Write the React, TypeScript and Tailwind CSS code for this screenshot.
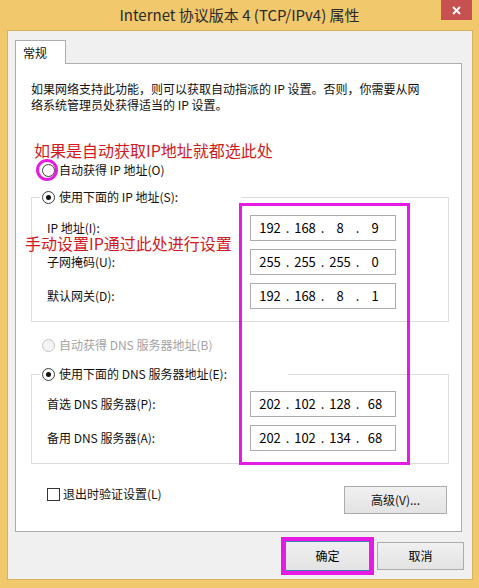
import { Fragment } from 'react';

const ui = "font-['Noto_Sans_CJK_SC',sans-serif]";

function Radio({ checked, disabled }: { checked?: boolean; disabled?: boolean }) {
  return (
    <span
      className={`flex h-[13px] w-[13px] shrink-0 items-center justify-center rounded-full border ${
        disabled ? 'border-[#c4c4c4] bg-[#f4f4f4]' : 'border-[#3c3c3c] bg-white'
      }`}
    >
      {checked && <span className="h-[5px] w-[5px] rounded-full bg-[#111]" />}
    </span>
  );
}

function IpInput({ parts }: { parts: string[] }) {
  return (
    <div className="flex h-[26px] w-[146px] items-center border border-[#a9abb1] bg-white pl-[4px] text-[13px] text-black">
      {parts.map((p, i) => (
        <Fragment key={i}>
          <span className="w-[30px] text-center">{p}</span>
          {i < 3 && <span className="w-[5px] text-center">.</span>}
        </Fragment>
      ))}
    </div>
  );
}

function FieldRow({ label, parts }: { label: string; parts: string[] }) {
  return (
    <div className="flex items-center">
      <span className="w-[218px] pl-[15px]">{label}</span>
      <IpInput parts={parts} />
    </div>
  );
}

function Button({ children, focused }: { children: React.ReactNode; focused?: boolean }) {
  return (
    <div
      className={`flex items-center justify-center border bg-gradient-to-b from-[#f0f0f0] to-[#e3e3e3] text-[12px] text-black ${
        focused ? 'h-[30px] w-[85px] border-[#3c7fb1]' : 'h-[28px] w-[87px] border-[#acacac]'
      }`}
    >
      {children}
    </div>
  );
}

export default function App() {
  return (
    <div className={`flex h-[588px] w-[479px] flex-col bg-[#f1c86c] ${ui} text-[12px] leading-[16px] text-[#111]`}>
      {/* 标题栏 */}
      <div className="relative flex h-[30px] items-center justify-center">
        <span className="text-[15px] text-[#2a2a2a]">Internet 协议版本 4 (TCP/IPv4) 属性</span>
        <div className="absolute right-[7px] top-0 flex h-[20px] w-[31px] items-center justify-center bg-[#c75050]">
          <svg width="9" height="9" viewBox="0 0 9 9">
            <path d="M1 1 L8 8 M8 1 L1 8" stroke="#fff" strokeWidth="1.8" />
          </svg>
        </div>
      </div>

      {/* 客户区 */}
      <div className="mb-[8px] ml-[7px] mr-[6px] flex flex-1 flex-col border border-[#d8b260] bg-[#f0f0f0] pl-[7px] pr-[8px]">
        {/* 选项卡 */}
        <div className="mt-[9px] flex">
          <div className="relative z-10 -mb-px flex h-[24px] w-[51px] items-center border border-b-0 border-[#adadad] bg-white pl-[7px]">
            常规
          </div>
        </div>

        <div className="relative w-[447px] border border-[#adadad] bg-white pb-[17px]">
          <p className="pl-[15px] pt-[17px]">
            如果网络支持此功能，则可以获取自动指派的 IP 设置。否则，你需要从网
            <br />
            络系统管理员处获得适当的 IP 设置。
          </p>

          <p className="mt-[27px] pl-[18px] text-[16px] leading-[20px] text-[#d01a1e]">如果是自动获取IP地址就都选此处</p>

          <div className="mt-[2px] flex h-[16px] items-center gap-[4px] pl-[26px]">
            <span className="relative">
              <Radio />
              <span className="absolute -left-[6px] -top-[5px] h-[22px] w-[22px] rounded-full border-[3px] border-[#e51be5]" />
            </span>
            <span>自动获得 IP 地址(O)</span>
          </div>

          {/* IP 分组 */}
          <div className="relative ml-[15px] mr-[12px] mt-[19px] flex flex-col gap-[8px] border border-[#dcdcdc] pb-[12px]">
            <div className="-mt-[9px] mb-[2px] ml-[8px] flex h-[16px] w-[201px] items-center gap-[4px] bg-white pl-[2px]">
              <Radio checked />
              <span>使用下面的 IP 地址(S):</span>
            </div>
            <FieldRow label="IP 地址(I):" parts={['192', '168', '8', '9']} />
            <FieldRow label="子网掩码(U):" parts={['255', '255', '255', '0']} />
            <FieldRow label="默认网关(D):" parts={['192', '168', '8', '1']} />
            <span className="absolute -left-[7px] top-[36px] whitespace-nowrap text-[16px] leading-[18px] text-[#d01a1e]">
              手动设置IP通过此处进行设置
            </span>
          </div>

          <div className="mt-[15px] flex h-[16px] items-center gap-[4px] pl-[26px] text-[#a3a3a3]">
            <Radio disabled />
            <span>自动获得 DNS 服务器地址(B)</span>
          </div>

          {/* DNS 分组 */}
          <div className="ml-[15px] mr-[12px] mt-[21px] flex flex-col gap-[8px] border border-[#dcdcdc] pb-[12px]">
            <div className="-mt-[9px] mb-[1px] ml-[8px] flex h-[16px] w-[248px] items-center gap-[4px] bg-white pl-[2px]">
              <Radio checked />
              <span>使用下面的 DNS 服务器地址(E):</span>
            </div>
            <FieldRow label="首选 DNS 服务器(P):" parts={['202', '102', '128', '68']} />
            <FieldRow label="备用 DNS 服务器(A):" parts={['202', '102', '134', '68']} />
          </div>

          <div className="mt-[22px] flex items-start justify-between pl-[31px] pr-[14px]">
            <div className="flex h-[16px] items-center gap-[3px]">
              <span className="h-[13px] w-[13px] border border-[#333] bg-white" />
              <span>退出时验证设置(L)</span>
            </div>
            <div className="flex h-[28px] w-[103px] items-center justify-center border border-[#acacac] bg-gradient-to-b from-[#f0f0f0] to-[#e3e3e3]">
              高级(V)...
            </div>
          </div>

          {/* 标注框 */}
          <div className="absolute left-[223px] top-[139px] h-[262px] w-[171px] border-[3px] border-[#e51be5]" />
        </div>

        {/* 底部按钮 */}
        <div className="mt-[5px] flex items-center justify-end gap-[3px]">
          <div className="border-[4px] border-[#e51be5]">
            <Button focused>确定</Button>
          </div>
          <Button>取消</Button>
        </div>
      </div>
    </div>
  );
}
